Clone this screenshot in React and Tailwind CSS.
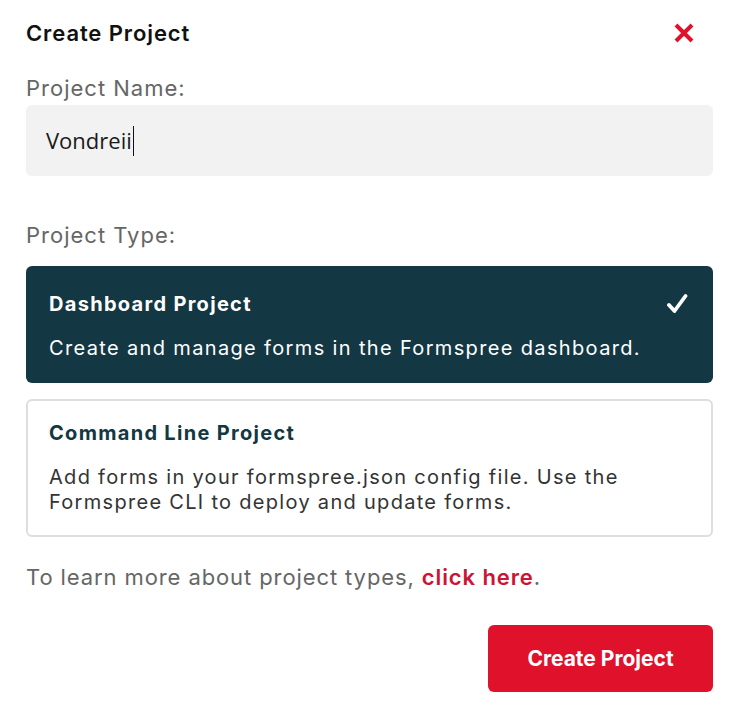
import React from 'react';

// Create Project modal
const INTER = { fontFamily: 'Inter, "Noto Sans", sans-serif' };

export default function App() {
    return (
        <div className="min-h-screen bg-white pl-[26px] pr-[25px] pt-[18px] pb-6 text-[#111]" style={INTER}>
            {/* Header */}
            <div className="flex items-center justify-between h-[30px]">
                <h1 className="text-[22px] font-semibold tracking-[0.9px] text-[#111]">Create Project</h1>
                <button className="mr-[18px] text-[#e0112b]" aria-label="Close">
                    <svg width="22" height="22" viewBox="0 0 22 22">
                        <path d="M3 3 L19 19 M19 3 L3 19" stroke="currentColor" strokeWidth="4" strokeLinecap="butt" />
                    </svg>
                </button>
            </div>

            {/* Project name */}
            <label className="block mt-[25px] text-[22px] leading-[30px] tracking-[1px] text-[#666]">Project Name:</label>
            <div className="mt-[2px] h-[71px] rounded-md bg-[#f2f2f2] px-5 flex items-center">
                <span className="text-[22px] text-[#1a1a1a]" style={{ fontFamily: '"Open Sans", "Noto Sans", sans-serif' }}>
                    Vondreii
                </span>
                <span className="ml-[1px] inline-block w-[1px] h-[30px] bg-[#111]" />
            </div>

            {/* Project type */}
            <label className="block mt-[44px] text-[22px] leading-[30px] tracking-[1px] text-[#666]">Project Type:</label>
            <div className="mt-[16px] rounded-md bg-[#133743] px-[23px] pt-[25px] pb-[22px] text-white">
                <div className="flex items-center justify-between">
                    <h2 className="text-[20px] font-bold leading-[26px] tracking-[1.3px]">Dashboard Project</h2>
                    <svg width="22" height="22" viewBox="0 0 22 22" className="mr-[2px]">
                        <path d="M3 12 L8.5 18 L19.5 3" stroke="white" strokeWidth="3.8" fill="none" strokeLinecap="round" strokeLinejoin="round" />
                    </svg>
                </div>
                <p className="mt-[18px] text-[20px] leading-[26px] tracking-[1.35px]">
                    Create and manage forms in the Formspree dashboard.
                </p>
            </div>

            <div className="mt-[16px] rounded-md border-2 border-[#dedede] px-[21px] pt-[19px] pb-[20px]">
                <h2 className="text-[20px] font-bold leading-[26px] tracking-[1.3px] text-[#133743]">Command Line Project</h2>
                <p className="mt-[19px] text-[20px] leading-[25px] tracking-[1.3px] text-[#333]">
                    Add forms in your formspree.json config file. Use the<br />
                    Formspree CLI to deploy and update forms.
                </p>
            </div>

            <p className="mt-[25px] text-[22px] leading-[30px] tracking-[0.9px] text-[#666]">
                To learn more about project types,{' '}
                <a className="font-semibold text-[#cc1434]" href="#">click here</a>.
            </p>

            <div className="mt-[33px] flex justify-end">
                <button className="h-[67px] w-[225px] rounded-md bg-[#e0112b] text-[21px] font-bold text-white">
                    Create Project
                </button>
            </div>
        </div>
    );
}
